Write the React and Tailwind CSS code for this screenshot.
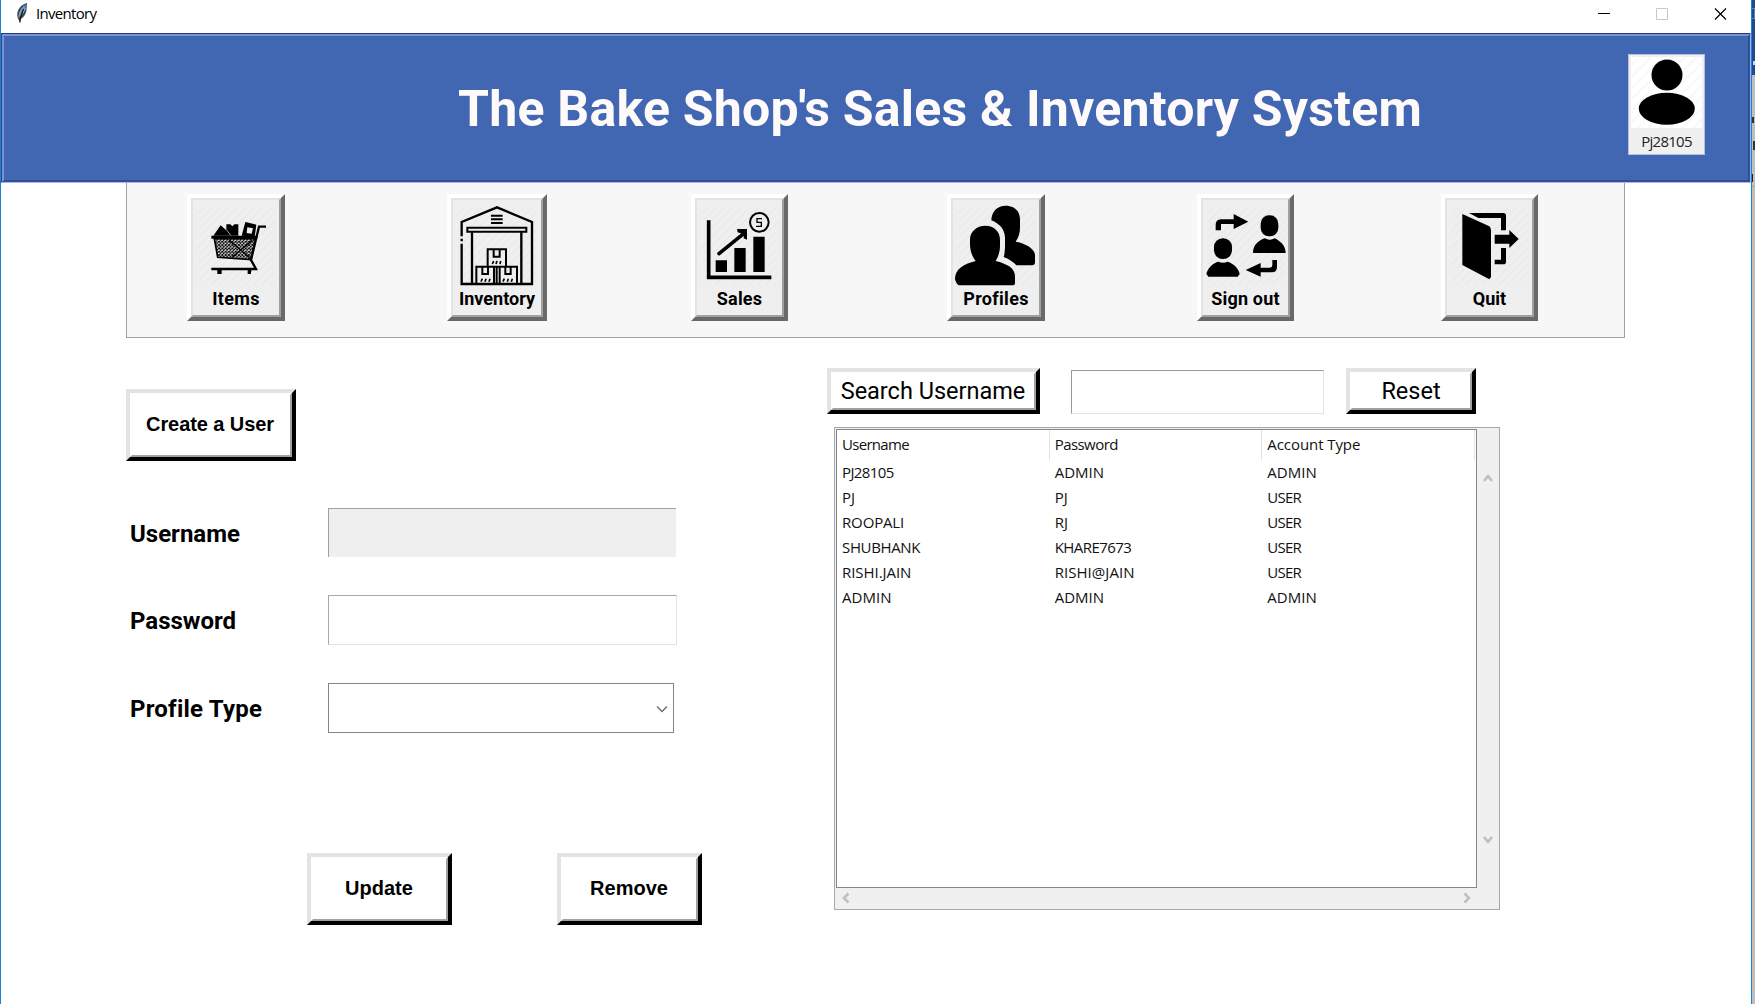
function Feather() {
  return (
    <svg className="ml-[14px] mt-[2px] h-[21px] w-[13px]" viewBox="0 0 13 21">
      <path d="M12 1C8 2 4 5 2.500 10C2 13 2 15 3.500 17.500L5 20L6 17C9 15 11 12 11.500 8Z" fill="#3d4753" />
      <path d="M11 2.500C8 4 5.500 8 4.500 14L6.500 13.500C9.500 10.500 10.500 7 11 2.500Z" fill="#5a94d8" />
      <path d="M9 4.500C5 8 4 12 4 15.500M10.500 6L8 11" stroke="#a9b6c4" strokeWidth="1" fill="none" />
      <path d="M8.500 7L5 17V20.500" stroke="#12161c" strokeWidth="1.200" fill="none" />
    </svg>
  );
}

function CartIcon() {
  return (
    <>
      <defs>
        <pattern id="mesh" width="10" height="10" patternUnits="userSpaceOnUse">
          <path d="M0 0L10 10M10 0L0 10" stroke="#000" strokeWidth="3" />
        </pattern>
      </defs>
      <path d="M283 182L305 151L322 166V148H334L340 154L346 148H358V182ZM368 182L379 141L412 149L407 186Z" fill="#000" />
      <path d="M385 157L402 160L398 176L383 174Z" fill="#efefef" />
      <path d="M322 164L336 182" stroke="#efefef" strokeWidth="2" />
      <path d="M286 191H410L396 254L296 247Z" fill="url(#mesh)" stroke="#000" strokeWidth="5" />
      <path d="M330 195L392 248M340 246L400 196" stroke="#000" strokeWidth="4" />
      <path d="M277 187H415" stroke="#000" strokeWidth="9" />
      <path d="M441 155H420L412 188L396 255L411 282H277" fill="none" stroke="#000" strokeWidth="7" />
      <path d="M295 284H308V297H295ZM386 284H397V290H396V297H386Z" fill="#000" />
    </>
  );
}

function WarehouseIcon() {
  return (
    <g fill="none" stroke="#000" strokeWidth="7">
      <path d="M1027 184V141L1133 97L1238 141V327H1027V206M1027 191V199" />
      <path d="M1044 158H1221V170H1044Z" strokeWidth="6" />
      <path d="M1058 172V327M1206 172V327" />
      <path d="M1115 122H1150M1115 133H1150M1115 144H1150" strokeWidth="6" />
      <path d="M1105 274V223H1160V274M1123 223V245H1141V223" strokeWidth="6" />
      <path d="M1071 327V275H1124V327M1141 327V275H1193V327M1124 275H1141M1132 275V327M1089 277V297H1106V277M1158 277V297H1174V277" strokeWidth="6" />
      <path d="M1119 267L1123 258M1130 267L1133 258M1142 267L1144 258M1085 320L1089 311M1097 320L1100 311M1109 320L1112 311M1151 320L1155 311M1164 320L1167 311M1176 320L1179 311" strokeWidth="5" />
    </g>
  );
}

function SalesIcon() {
  return (
    <>
      <path d="M87 136V307H275" fill="none" stroke="#000" strokeWidth="11" />
      <path d="M108 256H142V291H108ZM164 219H198V291H164ZM221 185H255V291H221Z" fill="#000" />
      <path d="M118 236L192 176" stroke="#000" strokeWidth="11" strokeLinecap="round" />
      <path d="M172 162H202V194L192 190V178L174 172Z" fill="#000" />
      <circle cx="239" cy="142" r="28" fill="none" stroke="#000" strokeWidth="6" />
      <path d="M247 131H232V142H245V154H229" fill="none" stroke="#000" strokeWidth="4" />
    </>
  );
}

function ProfilesIcon() {
  return (
    <>
      <path d="M937 136C938 108 956 92 980 92C1006 92 1023 108 1023 134V157C1023 176 1018 188 1010 200C1040 205 1068 222 1068 240V262Q1068 271 1059 271H1012C1004 262 992 253 974 246C979 232 978 206 978 186C976 162 962 146 937 136Z" fill="#000" />
      <path d="M919 152C945 152 963 169 963 194V213C963 231 957 246 950 258C984 266 1008 280 1008 303V324Q1008 331 1000 331H840Q831 327 828 312C828 282 856 266 890 258C881 246 873 230 873 208V194C873 169 893 152 919 152Z" fill="#000" />
    </>
  );
}

function SignOutIcon() {
  return (
    <>
      <path d="M108 166V150Q108 134 124 133H162V117L206 140L162 162V147H124V166Z" fill="#000" />
      <path d="M292 255V276Q292 292 277 292H243V305L198 285L243 264V278H270Q278 278 278 270V255Z" fill="#000" />
      <rect x="243" y="121" width="53" height="63" rx="25" fill="#000" />
      <path d="M220 234C220 207 240 196 255 190Q270 198 285 190C302 198 318 212 318 234Z" fill="#000" />
      <rect x="103" y="190" width="54" height="62" rx="26" fill="#000" />
      <path d="M80 296C87 275 101 264 116 260Q130 266 144 260C162 266 177 280 180 297L174 305H86Z" fill="#000" />
    </>
  );
}

function QuitIcon() {
  return (
    <>
      <path d="M847 117L928 154Q933 158 933 166V306L928 313L847 270Z" fill="#000" />
      <path d="M867 114H970Q978 114 978 122V166H963V129H895Z" fill="#000" />
      <path d="M944 179H988V165L1016 192L988 219V206H944Z" fill="#000" />
      <path d="M963 219H978V261Q978 268 970 268H944V254H963Z" fill="#000" />
    </>
  );
}

const tools = [
  { label: "Items", box: "234 96 234 234", place: "ml-[60px] w-[98px]", text: "tracking-[0.3px]", Icon: CartIcon },
  { label: "Inventory", box: "1016 96 234 234", place: "ml-[162px] w-[100px]", text: "", Icon: WarehouseIcon },
  { label: "Sales", box: "64 96 234 234", place: "ml-[144px] w-[97px]", text: "tracking-[0.2px]", Icon: SalesIcon },
  { label: "Profiles", box: "834 96 234 234", place: "ml-[159px] w-[98px]", text: "tracking-[0.3px]", Icon: ProfilesIcon },
  { label: "Sign out", box: "82 96 234 234", place: "ml-[152px] w-[97px]", text: "tracking-[0.2px]", Icon: SignOutIcon },
  { label: "Quit", box: "813 96 234 234", place: "ml-[147px] w-[97px]", text: "", Icon: QuitIcon },
];

function ToolButton({ label, box, place, text, Icon }) {
  return (
    <button className={"h-[127px] shrink-0 border-4 border-t-white border-l-white border-b-[#696969] border-r-[#696969] " + place}>
      <span className="flex h-full w-full flex-col items-center border-2 border-t-[#e3e3e3] border-l-[#e3e3e3] border-b-[#a0a0a0] border-r-[#a0a0a0] bg-[#efefef] pt-[7px]">
        <svg
          className="h-[78px] w-[78px] shrink-0 overflow-visible bg-[repeating-linear-gradient(135deg,#efefef_0px,#efefef_4px,#e8e8e8_5px,#efefef_6px)]"
          viewBox={box}
        >
          <Icon />
        </svg>
        <span className={"mt-[2px] text-[18px] leading-[24px] font-bold whitespace-nowrap " + text}>{label}</span>
      </span>
    </button>
  );
}

function RaisedButton({ className, children }) {
  return (
    <button className={"shrink-0 border-4 border-t-[#e3e3e3] border-l-[#e3e3e3] border-b-black border-r-black " + className}>
      <span className="flex h-full w-full items-center justify-center border-2 border-t-white border-l-white border-b-[#a0a0a0] border-r-[#a0a0a0] bg-white whitespace-nowrap">
        {children}
      </span>
    </button>
  );
}

function Chevron({ className, d, stroke = "#bfbfbf", width = 2.6 }) {
  return (
    <svg className={"shrink-0 " + className} viewBox="0 0 12 12" fill="none" stroke={stroke} strokeWidth={width}>
      <path d={d} />
    </svg>
  );
}

const columns = [
  ["Username", "tracking-[-0.7px]"],
  ["Password", "tracking-[-0.55px]"],
  ["Account Type", "tracking-[-0.08px]"],
];

const spacing = {
  PJ28105: "tracking-[-0.6px]",
  ADMIN: "tracking-[0.02px]",
  USER: "tracking-[-0.8px]",
  ROOPALI: "tracking-[-0.15px]",
  SHUBHANK: "tracking-[-0.35px]",
  KHARE7673: "tracking-[-0.56px]",
  "RISHI.JAIN": "tracking-[-0.05px]",
  "RISHI@JAIN": "tracking-[0.05px]",
};

const rows = [
  ["PJ28105", "ADMIN", "ADMIN"],
  ["PJ", "PJ", "USER"],
  ["ROOPALI", "RJ", "USER"],
  ["SHUBHANK", "KHARE7673", "USER"],
  ["RISHI.JAIN", "RISHI@JAIN", "USER"],
  ["ADMIN", "ADMIN", "ADMIN"],
];

function TitleBar() {
  return (
    <div className="flex h-[33px] shrink-0 bg-white">
      <Feather />
      <span className="ml-[8px] font-['Open_Sans',sans-serif] text-[15px] leading-[27px] tracking-[-0.69px]">Inventory</span>
      <svg className="mt-[8px] mr-[24px] ml-auto h-[12px] w-[129px]" viewBox="0 0 129 12" fill="none">
        <path d="M0 5.500H12" stroke="#000" />
        <path d="M58.500 0.500H69.500V11.500H58.500Z" stroke="#c8c8c8" />
        <path d="M117 0.500L128 11.500M128 0.500L117 11.500" stroke="#000" strokeWidth="1.200" />
      </svg>
    </div>
  );
}

function Header() {
  return (
    <header className="h-[150px] shrink-0 border border-t-[#22386e] border-l-[#2b4683] border-b-[#a9b6ff] border-r-[#a9b6ff]">
      <div className="flex h-full border-2 border-t-[#7b91d6] border-l-[#7b91d6] border-b-[#34508c] border-r-[#34508c] bg-[#4267b2]">
        <h1 className="ml-[454px] text-[50px] leading-[146px] font-bold tracking-[0.23px] whitespace-nowrap text-[#fffafa]">
          The Bake Shop's Sales &amp; Inventory System
        </h1>
        <div className="mt-[18px] mr-[43px] ml-auto flex h-[101px] w-[77px] flex-col items-center border border-[#b4bfe0] bg-[#f0f0f0] pt-[2px]">
          <svg
            className="h-[71px] w-[71px] shrink-0 bg-[repeating-linear-gradient(135deg,#ffffff_0px,#ffffff_5px,#f6f6f6_6px,#ffffff_8px)]"
            viewBox="0 0 71 71"
          >
            <circle cx="36" cy="18" r="15.500" />
            <ellipse cx="35.800" cy="51.700" rx="28" ry="16" />
          </svg>
          <span className="font-['Open_Sans',sans-serif] text-[15px] leading-[26px] tracking-[-0.72px] text-[#222]">Pj28105</span>
        </div>
      </div>
    </header>
  );
}

function Field({ label, text, className, children }) {
  return (
    <div className="flex h-[50px] items-center">
      <label className={"ml-[4px] w-[198px] text-[24px] leading-[50px] font-bold " + text}>{label}</label>
      <div className={"flex items-center " + className}>{children}</div>
    </div>
  );
}

function ProfileForm() {
  return (
    <section className="flex w-[701px] flex-col">
      <RaisedButton className="mt-[51px] h-[72px] w-[170px] font-['Liberation_Sans',sans-serif] text-[20px] font-bold tracking-[-0.08px]">
        <span className="mr-[2px] mb-[3px]">Create a User</span>
      </RaisedButton>
      <div className="mt-[47px] flex flex-col gap-[37.500px]">
        <Field label="Username" text="pt-px" className="mb-[2px] h-[49px] w-[348px] border-t border-l border-[#a0a0a0] bg-[#efefef]" />
        <Field label="Password" text="pt-px" className="mb-[1px] h-[50px] w-[349px] border border-t-[#a8a8a8] border-l-[#a8a8a8] border-b-[#e3e3e3] border-r-[#e3e3e3] bg-white" />
        <Field label="Profile Type" text="pt-px tracking-[0.22px]" className="h-[50px] w-[346px] justify-end border border-[#858585] bg-white pr-[5px]">
          <Chevron className="mt-[2px] h-[12px] w-[12px]" d="M1 3.500L6 8.500L11 3.500" stroke="#707070" width={1.5} />
        </Field>
      </div>
      <div className="mt-[120px] ml-[181px] flex gap-[105px] font-['Liberation_Sans',sans-serif] text-[20px] font-bold">
        <RaisedButton className="h-[72px] w-[145px]"><span className="mr-px mb-[3px]">Update</span></RaisedButton>
        <RaisedButton className="h-[72px] w-[145px]"><span className="mr-px mb-[3px]">Remove</span></RaisedButton>
      </div>
    </section>
  );
}

function UserTable() {
  return (
    <div className="mt-[13px] ml-[7px] grid h-[483px] w-[666px] grid-cols-[641px_1fr] grid-rows-[459px_1fr] border border-[#a8a8a8] bg-[#f0f0f0] pt-px pl-px">
      <div className="border border-[#828790] bg-white font-['Open_Sans',sans-serif] text-[15px] text-[#111]">
        <div className="grid h-[30px] w-[638px] grid-cols-3">
          {columns.map(([name, text]) => (
            <div key={name} className={"border-r border-[#e3e3e3] pl-[5px] leading-[29px] " + text}>{name}</div>
          ))}
        </div>
        {rows.map((row, i) => (
          <div key={i} className="grid h-[25px] w-[638px] grid-cols-3">
            {row.map((cell, j) => (
              <div key={j} className={"pl-[5px] leading-[24px] " + (spacing[cell] || "")}>{cell}</div>
            ))}
          </div>
        ))}
      </div>
      <div className="flex flex-col items-center justify-between pt-[43px] pb-[42px]">
        <Chevron className="h-[12px] w-[12px]" d="M2 9L6 4L10 9" />
        <Chevron className="h-[12px] w-[12px]" d="M2 3L6 8L10 3" />
      </div>
      <div className="flex items-center justify-between px-[4px] pb-px">
        <Chevron className="h-[12px] w-[12px]" d="M8.500 1.500L4 6L8.500 10.500" />
        <Chevron className="h-[12px] w-[12px]" d="M3.500 1.500L8 6L3.500 10.500" />
      </div>
    </div>
  );
}

function UserPanel() {
  return (
    <section className="pt-[30px]">
      <div className="flex text-[23.5px]">
        <RaisedButton className="h-[46px] w-[213px]"><span className="mt-[2px] mr-px">Search Username</span></RaisedButton>
        <div className="mt-[2px] ml-[31px] h-[44px] w-[253px] border border-t-[#999] border-l-[#999] border-b-[#e3e3e3] border-r-[#e3e3e3] bg-white" />
        <RaisedButton className="ml-[22px] h-[46px] w-[130px]"><span className="mt-[2px]">Reset</span></RaisedButton>
      </div>
      <UserTable />
    </section>
  );
}

function BackgroundEdge() {
  return (
    <div className="flex w-[3px] flex-col overflow-hidden bg-[#c0bebd]">
      <div className="h-[75px] shrink-0 bg-[#1f4a8c] pt-[8px]">
        <div className="h-[11px] border border-l-0 border-[#5f80b4]" />
        <div className="mt-[42px] ml-px h-[4px] bg-[#c5d2e8]" />
      </div>
      <div className="mt-[42px] h-[6px] w-[2px] bg-[#333]" />
      <div className="mt-[18px] ml-px h-[9px] bg-[#333]" />
      <div className="mt-[24px] h-[8px] w-px bg-[#222]" />
      <div className="mt-[4px] h-px bg-[#aaa]" />
    </div>
  );
}

export default function App() {
  return (
    <div className="flex h-[1004px] w-[1755px] overflow-hidden bg-white font-['Roboto',sans-serif] text-black">
      <main className="flex w-[1752px] flex-col border-x border-[#1883d7]">
        <TitleBar />
        <Header />
        <nav className="ml-[125px] flex h-[155px] w-[1499px] shrink-0 border border-t-0 border-[#a0a0a0] bg-[#f7f7f7] pt-[11px]">
          {tools.map((tool) => (
            <ToolButton key={tool.label} {...tool} />
          ))}
        </nav>
        <div className="ml-[125px] flex">
          <ProfileForm />
          <UserPanel />
        </div>
      </main>
      <BackgroundEdge />
    </div>
  );
}
